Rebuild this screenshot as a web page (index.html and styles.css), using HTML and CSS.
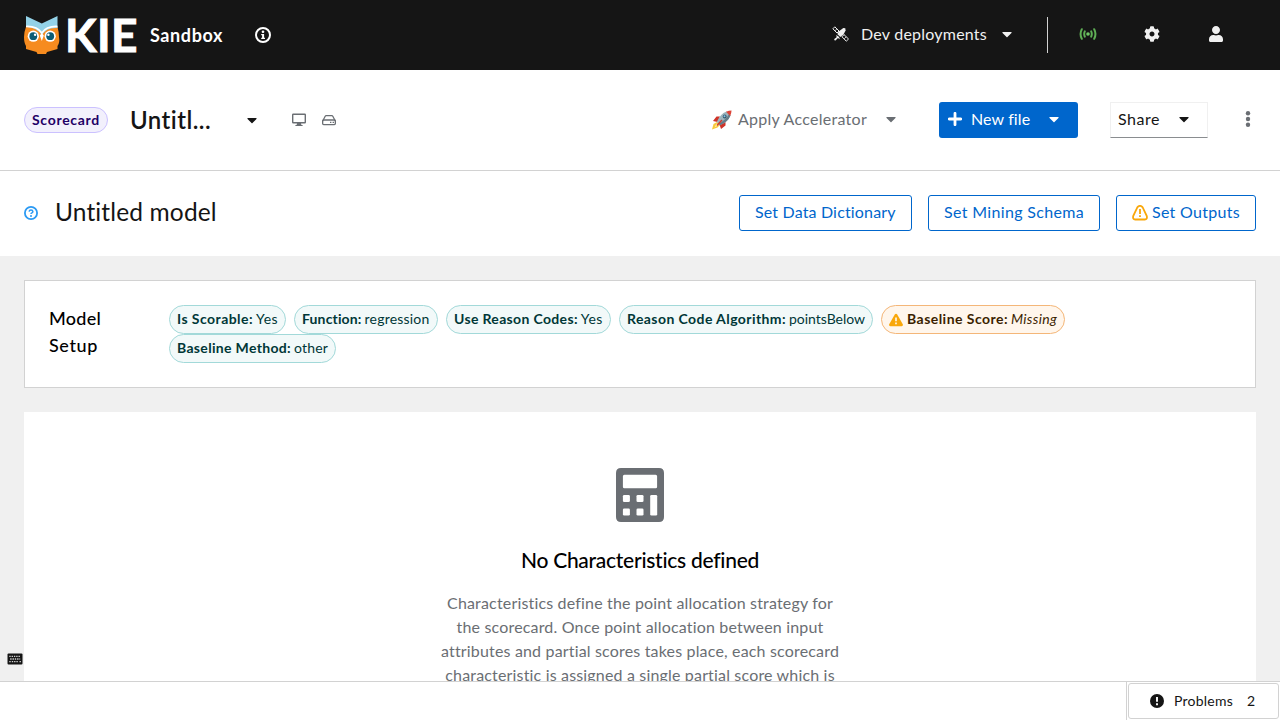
FILE: index.html
```html
<!DOCTYPE html>
<html lang="en">
<head>
<meta charset="utf-8">
<title>KIE Sandbox</title>
<link rel="stylesheet" href="styles.css">
</head>
<body>
<svg class="defs" width="0" height="0">
  <symbol id="caret" viewBox="0 0 320 512"><path d="M31.3 192h257.3c17.8 0 26.700 21.500 14.100 34.100L174.100 354.800c-7.800 7.800-20.500 7.800-28.300 0L17.200 226.100C4.600 213.500 13.500 192 31.300 192z"/></symbol>
</svg>
<div class="app">
  <header class="masthead">
    <svg class="owl" viewBox="0 0 36 40">
      <path d="M2 12 Q0 17 0 22 Q0 28 2 31 V34 L12.500 37 L13.500 39 H22 L23 37 L33.500 34 V31 Q36 28 35 22 Q35 17 33.500 12Z" fill="#f68b1f"/>
      <path d="M2 1 L17.800 8.500 L33.500 1 V13 Q23 12 17.800 20 Q12 12 2 12Z" fill="#93d2e8"/>
      <path d="M2 11.500 Q13 11 17.800 18 Q22.500 11 33.500 11.500" fill="none" stroke="#fff" stroke-width="1.700"/>
      <circle cx="9.300" cy="21.200" r="5.600" fill="#fff"/><circle cx="26.200" cy="21.200" r="5.600" fill="#fff"/>
      <circle cx="9.300" cy="21.200" r="3.900" fill="#0b5c75"/><circle cx="26.200" cy="21.200" r="3.900" fill="#0b5c75"/>
      <circle cx="11.100" cy="19.800" r="1.200" fill="#fff"/><circle cx="24.400" cy="19.800" r="1.200" fill="#fff"/>
      <path d="M15.800 20.500 L17.800 18 L19.800 20.500 L17.800 26Z" fill="#fff"/>
    </svg>
    <span class="kie">KIE</span>
    <span class="sandbox">Sandbox</span>
    <svg class="info" viewBox="0 0 16 16"><circle cx="8" cy="8" r="7" fill="none" stroke="#fff" stroke-width="2"/><path d="M8 3.400a1.350 1.350 0 1 1 0 2.700a1.350 1.350 0 0 1 0-2.700zM6.200 7h2.900v3.800h.9v1.300H6.200v-1.300h.9V8.300h-.9z" fill="#fff"/></svg>
    <div class="masthead-tools">
      <svg class="satellite" viewBox="0 0 16 16" fill="#f0f0f0"><path d="M1.800.8l4.200 4.200-2 2L-.1 2.800zM11 8.600l4.500 4.400-2.200 2.200L9 10.800z" fill="none" stroke="#f0f0f0" stroke-width="1"/><path d="M3.900 2.900L1.900 4.900M13.200 10.800l-2 2" stroke="#f0f0f0" stroke-width=".8"/><path d="M6 5.200L10.300 2l2 .3.300 2.200-2 3.800-3.200 2.800L4.300 8z"/><path d="M2.800 9.200q3.600.5 4 4L4.900 12.100l-1.600 1.600-1.400-1 1.900-1.800z"/><circle cx="2.200" cy="13.600" r="1"/></svg>
      <span class="dev">Dev deployments</span>
      <svg class="caret dev-caret"><use href="#caret"/></svg>
      <span class="divider"></span>
      <svg class="signal" viewBox="0 0 18 16" fill="none" stroke="#5fae55" stroke-width="2" stroke-linecap="round"><circle cx="9" cy="8" r="1.800" fill="#6ec664" stroke="none"/><path d="M5.800 5.400Q4.600 8 5.800 10.600M12.200 5.400Q13.400 8 12.200 10.600M2.800 3.200Q.3 8 2.800 12.800M15.200 3.200Q17.700 8 15.200 12.800"/></svg>
      <svg class="cog" viewBox="0 0 512 512" fill="#f0f0f0"><path d="M487.400 315.700l-42.600-24.600c4.300-23.200 4.300-47 0-70.200l42.600-24.600c4.900-2.800 7.100-8.600 5.500-14-11.100-35.600-30-67.800-54.700-94.600-3.800-4.100-10-5.100-14.800-2.300L380.800 110c-17.900-15.400-38.500-27.300-60.800-35.100V25.800c0-5.600-3.900-10.500-9.400-11.700-36.700-8.200-74.300-7.800-109.200 0-5.500 1.200-9.400 6.100-9.400 11.700V75c-22.200 7.900-42.800 19.800-60.800 35.100L88.700 85.500c-4.900-2.800-11-1.900-14.800 2.300-24.700 26.700-43.600 58.900-54.700 94.600-1.700 5.400.6 11.200 5.500 14L67.300 221c-4.300 23.200-4.300 47 0 70.200l-42.600 24.600c-4.900 2.800-7.100 8.600-5.500 14 11.100 35.600 30 67.800 54.700 94.600 3.800 4.100 10 5.100 14.800 2.300l42.600-24.600c17.900 15.400 38.500 27.300 60.800 35.100v49.200c0 5.600 3.900 10.500 9.400 11.700 36.700 8.200 74.300 7.800 109.200 0 5.500-1.200 9.400-6.100 9.400-11.700v-49.200c22.200-7.900 42.800-19.800 60.800-35.100l42.600 24.600c4.900 2.800 11 1.900 14.800-2.300 24.700-26.700 43.600-58.900 54.700-94.600 1.500-5.500-.7-11.300-5.600-14.100zM256 336c-44.100 0-80-35.900-80-80s35.900-80 80-80 80 35.900 80 80-35.900 80-80 80z"/></svg>
      <svg class="user" viewBox="0 0 448 512" fill="#f0f0f0"><path d="M224 256c70.700 0 128-57.300 128-128S294.700 0 224 0 96 57.300 96 128s57.300 128 128 128zm89.600 32h-16.700c-22.200 10.200-46.900 16-72.900 16s-50.600-5.800-72.900-16h-16.700C60.200 288 0 348.200 0 422.400V464c0 26.500 21.500 48 48 48h352c26.500 0 48-21.500 48-48v-41.600c0-74.200-60.200-134.400-134.400-134.400z"/></svg>
    </div>
  </header>

  <section class="filebar">
    <span class="type-label"><b>Scorecard</b></span>
    <span class="filename">Untitl...</span>
    <svg class="caret file-caret"><use href="#caret"/></svg>
    <svg class="desktop" viewBox="0 0 14 14" fill="#6a6e73"><path fill-rule="evenodd" d="M1.200.5h11.600q1.200 0 1.200 1.200v7.600q0 1.200-1.200 1.200H9l.4 1.500h1.200v1H3.400v-1h1.200L5 10.500H1.200Q0 10.500 0 9.300V1.700Q0 .5 1.200.5zM1.400 1.900v7.200h11.200V1.900z"/></svg>
    <svg class="hdd" viewBox="0 0 14 14" fill="none" stroke="#6a6e73" stroke-width="1.300"><path d="M.7 8L3.200 3.200Q3.500 2.600 4.200 2.600h5.600q.7 0 1 .6L13.300 8"/><rect x=".65" y="7" width="12.700" height="4.600" rx="1"/><path d="M8 9.300h1.400M10.600 9.300H12"/></svg>
    <div class="file-actions">
      <svg class="rocket" viewBox="0 0 20 20"><path d="M5 12L1.500 14 0 19.500 5.500 17.500 8 15z" fill="#f7c93a"/><path d="M4.500 13.500L2.500 17.500 7 15z" fill="#fff0a0"/><path d="M8 6.500H4.500L1 11l4.500 1zM13.500 12v3.500L9 19l-1.500-4.500z" fill="#cf3429"/><path d="M4.800 12Q8 4 14.500 1.500L18.500 5.500Q16 12 8 15.200z" fill="#9bb4bd"/><path d="M6.500 13.800Q14 10 17 4L18.500 5.500Q16 12 8 15.200z" fill="#647c88"/><path d="M14 1.800Q17 .5 19.500.500 19.500 3 18.200 6z" fill="#dc4437"/><circle cx="12.700" cy="6.500" r="1.900" fill="#37576b"/><circle cx="12.500" cy="6.300" r="1" fill="#83c6e8"/><path d="M10 10L5 15.500" stroke="#d33a2e" stroke-width="1.500"/></svg>
      <span class="accel">Apply Accelerator</span>
      <svg class="caret accel-caret"><use href="#caret"/></svg>
      <button class="new-file"><svg class="plus" viewBox="0 0 14 14"><path d="M7 1.300v11.400M1.300 7h11.400" stroke="#fff" stroke-width="2.800" stroke-linecap="round"/></svg><span>New file</span><svg class="caret"><use href="#caret"/></svg></button>
      <button class="share"><span>Share</span><svg class="caret"><use href="#caret"/></svg></button>
      <svg class="kebab" viewBox="0 0 6 16" fill="#6a6e73"><circle cx="3" cy="2.300" r="2.200"/><circle cx="3" cy="8" r="2.200"/><circle cx="3" cy="13.700" r="2.200"/></svg>
    </div>
  </section>

  <section class="titlebar">
    <svg class="help" viewBox="0 0 14 14" fill="none" stroke="#2b9af3"><circle cx="7" cy="7" r="6.100" stroke-width="1.800"/><path d="M5.100 5.600Q5.300 4.100 7 4.100T8.900 5.600Q8.900 6.400 7.900 6.900 7 7.300 7 8.100" stroke-width="1.500"/><circle cx="7" cy="9.900" r="1" fill="#2b9af3" stroke="none"/></svg>
    <h1 class="model-name">Untitled model</h1>
    <div class="title-actions">
      <button class="outline dict"><span>Set Data Dictionary</span></button>
      <button class="outline mining"><span>Set Mining Schema</span></button>
      <button class="outline outputs"><svg class="warn-outline" viewBox="0 0 16 16" fill="none" stroke="#f9a70a" stroke-width="1.800"><path d="M5.300 2.400Q8-.7 10.700 2.400L14.700 10.800Q15.700 14.300 12.700 14.500H3.300Q.3 14.300 1.300 10.800z"/><path d="M8 4v5M8 10.200v1.900"/></svg><span>Set Outputs</span></button>
    </div>
  </section>

  <main class="canvas">
    <section class="setup">
      <h2 class="setup-title"><span class="line-model">Model</span><span class="line-setup">Setup</span></h2>
      <div class="labels">
        <span class="chip scorable"><b>Is Scorable:</b><span>Yes</span></span>
        <span class="chip function"><b>Function:</b><span>regression</span></span>
        <span class="chip reason-codes"><b>Use Reason Codes:</b><span>Yes</span></span>
        <span class="chip algorithm"><b>Reason Code Algorithm:</b><span>pointsBelow</span></span>
        <span class="chip orange"><svg class="warn" viewBox="0 0 14 14"><path d="M7 .7q.7 0 1.100.6l5.700 10q.5 1.500-1.100 1.900H1.300Q-.3 12.800.2 11.300l5.700-10Q6.300.7 7 .7z" fill="#f9a70a"/><path d="M7 4.500v3.700M7 9.500v1.700" stroke="#fff" stroke-width="1.500"/></svg><b>Baseline Score:</b><i>Missing</i></span>
        <span class="chip method"><b>Baseline Method:</b><span>other</span></span>
      </div>
    </section>
    <section class="empty">
      <svg class="calc" viewBox="0 0 48 54"><path fill="#6a6e73" fill-rule="evenodd" d="M5 0h38q5 0 5 5v44q0 5-5 5H5q-5 0-5-5V5q0-5 5-5zM8.400 6.700q-1.500 0-1.500 1.500v10.600q0 1.500 1.500 1.500h31.200q1.500 0 1.500-1.500V8.200q0-1.500-1.500-1.500z"/><g fill="#fff"><rect x="6.900" y="27" width="7" height="7" rx="1.300"/><rect x="20.500" y="27" width="7" height="7" rx="1.300"/><rect x="6.900" y="40.500" width="7" height="7" rx="1.300"/><rect x="20.500" y="40.500" width="7" height="7" rx="1.300"/><rect x="34.200" y="27" width="7" height="20.500" rx="1.300"/></g></svg>
      <h3 class="empty-title">No Characteristics defined</h3>
      <p class="empty-body"><span>Characteristics define the point allocation strategy for</span><span>the scorecard. Once point allocation between input</span><span>attributes and partial scores takes place, each scorecard</span><span>characteristic is assigned a single partial score which is</span></p>
    </section>
    <svg class="keyboard" viewBox="0 0 16 12"><rect x=".5" y=".5" width="15" height="11" rx="1" fill="#151515"/><path d="M2.300 3.300h11.500M3.200 6h10M2.300 8.700h1.400M4.800 8.700h6.600M12.500 8.700h1.400" stroke="#d0d0d0" stroke-width="1.300" stroke-dasharray="1.400 .9"/></svg>
  </main>

  <footer class="dock">
    <div class="dock-end">
      <button class="problems"><svg class="bang" viewBox="0 0 14 14"><circle cx="7" cy="7" r="7" fill="#151515"/><path d="M7 3v4.700M7 9.200v2" stroke="#fff" stroke-width="1.900"/></svg><span>Problems</span><span class="count">2</span></button>
    </div>
  </footer>
</div>
</body>
</html>
```
FILE: styles.css
```css
* { box-sizing: border-box; }
body { margin: 0; font-family: Lato, "Noto Sans", sans-serif; font-size: 16px; line-height: 24px; color: #151515; background: #f0f0f0; }
h1, h2, h3, p { margin: 0; font-weight: 400; }
svg { flex: none; display: block; }
span, b, i, h1 { white-space: nowrap; }
button { font: inherit; padding: 0; margin: 0; display: flex; align-items: center; flex: none; }
button span { padding-bottom: 2px; }
.defs { position: absolute; }
.app { width: 1280px; height: 720px; display: flex; flex-direction: column; overflow: hidden; }
.caret { width: 10px; height: 16px; fill: currentColor; }

.masthead { height: 70px; flex: none; display: flex; align-items: center; background: #151515; color: #f0f0f0; padding-left: 24px; }
.owl { width: 36px; height: 40px; }
.kie { width: 74px; margin-left: 5px; font-size: 46px; line-height: 46px; font-weight: 700; letter-spacing: .4px; color: #fff; -webkit-text-stroke: 1px #fff; }
.sandbox { width: 73px; margin-left: 11px; font-size: 18px; font-weight: 700; letter-spacing: .6px; color: #fff; }
.info { width: 16px; height: 16px; margin-left: 32px; }
.masthead-tools { margin-left: auto; display: flex; align-items: center; padding-right: 57px; }
.satellite { width: 16px; height: 16px; margin-bottom: 2px; overflow: visible; }
.dev { width: 126px; margin-left: 12px; padding-bottom: 2px; letter-spacing: .226px; }
.dev-caret { margin-left: 15px; margin-bottom: 2px; }
.divider { width: 1px; height: 36px; margin-left: 35px; background: #d2d2d2; }
.signal { width: 18px; height: 16px; margin: 0 0 2px 31px; }
.cog { width: 16px; height: 16px; margin: 0 0 2px 47px; }
.user { width: 14px; height: 16px; margin: 0 0 2px 49px; }

.filebar { height: 101px; flex: none; display: flex; align-items: center; padding: 0 29px 0 24px; background: #fff; border-bottom: 1px solid #d2d2d2; }
.type-label { width: 84px; height: 26px; display: flex; align-items: center; padding-left: 7px; border: 1px solid #cbc1ff; border-radius: 13px; background: #f2f0fc; color: #1f0066; font-size: 14px; letter-spacing: .7px; }
.filename { width: 81px; margin-left: 22px; font-size: 24px; font-weight: 600; letter-spacing: .45px; }
.file-caret { margin-left: 36px; }
.desktop { width: 14px; height: 14px; margin-left: 35px; }
.hdd { width: 14px; height: 14px; margin-left: 16px; }
.file-actions { margin-left: auto; display: flex; align-items: center; color: #6a6e73; }
.rocket { width: 20px; height: 20px; }
.accel { width: 129px; margin-left: 6px; padding-bottom: 2px; letter-spacing: .274px; }
.accel-caret { margin-left: 19px; margin-bottom: 2px; }
.new-file { width: 139px; height: 36px; margin-left: 43px; padding-left: 9px; border: 0; border-radius: 3px; background: #06c; color: #fff; }
.plus { width: 14px; height: 14px; margin: 0 9px 2px 0; }
.new-file .caret { margin: 0 0 2px 19px; }
.new-file span { width: 59px; letter-spacing: .117px; }
.share { width: 98px; height: 36px; margin-left: 32px; padding-left: 7px; border: 1px solid #f0f0f0; border-bottom-color: #8a8d90; background: #fff; color: #151515; }
.share span { width: 42px; letter-spacing: .525px; }
.share .caret { margin: 0 0 2px 19px; }
.kebab { width: 6px; height: 16px; margin: 0 0 2px 37px; }

.titlebar { height: 85px; flex: none; display: flex; align-items: center; padding: 0 24px 1px; background: #fff; }
.help { width: 14px; height: 14px; }
.model-name { margin-left: 17px; padding-bottom: 3px; font-size: 24.5px; line-height: 30px; letter-spacing: .14px; }
.title-actions { margin-left: auto; display: flex; gap: 16px; }
.outline { height: 36px; border: 1px solid #06c; border-radius: 3px; background: #fff; color: #06c; padding-left: 15px; }
.dict { width: 173px; letter-spacing: .167px; }
.mining { width: 172px; letter-spacing: .335px; }
.outputs { width: 140px; letter-spacing: .294px; }
.warn-outline { width: 16px; height: 16px; margin: 0 4px 1px 0; }

.canvas { position: relative; flex: 1; min-height: 0; overflow: hidden; background: #f0f0f0; padding: 24px 24px 0; display: flex; flex-direction: column; gap: 24px; }
.setup { height: 108px; flex: none; display: flex; padding: 24px; background: #fff; border: 1px solid #d2d2d2; }
.setup-title { width: 120px; display: flex; flex-direction: column; color: #000; font-size: 18px; line-height: 27px; font-weight: 500; }
.line-model { letter-spacing: .26px; }
.line-setup { letter-spacing: .62px; }
.labels { display: flex; flex-wrap: wrap; column-gap: 8px; align-content: flex-start; flex: 1; padding-right: 100px; }
.chip { height: 29px; display: flex; align-items: center; padding: 0 0 2px 7px; border: 1px solid #a2d9d9; border-radius: 15px; background: #f2f9f9; color: #003737; font-size: 14px; line-height: 21px; }
.chip b { margin-right: 3px; }
.scorable { width: 117px; letter-spacing: .45px; }
.function { width: 144px; letter-spacing: .2px; }
.function b { letter-spacing: .14px; }
.reason-codes { width: 165px; letter-spacing: .34px; }
.algorithm { width: 254px; letter-spacing: -.02px; }
.algorithm b { letter-spacing: .417px; }
.orange { width: 184px; border-color: #f4b678; background: #fff6ec; color: #3b1f00; letter-spacing: .31px; }
.orange b { letter-spacing: .461px; }
.method { width: 167px; letter-spacing: .172px; }
.method b { letter-spacing: .327px; }
.warn { width: 14px; height: 14px; margin: 2px 4px 0 0; }

.empty { height: 400px; flex: none; display: flex; flex-direction: column; align-items: center; padding-top: 56px; background: #fff; }
.calc { width: 48px; height: 54px; }
.empty-title { margin-top: 23px; font-size: 21px; line-height: 30px; font-weight: 500; letter-spacing: -.27px; color: #000; }
.empty-body { margin-top: 16px; display: flex; flex-direction: column; align-items: center; color: #6a6e73; letter-spacing: .17px; }
.keyboard { position: absolute; left: 6.5px; top: 396.5px; width: 16px; height: 12px; }

.dock { height: 39px; flex: none; display: flex; justify-content: flex-end; background: #fff; border-top: 1px solid #d2d2d2; }
.dock-end { width: 154px; border-left: 1px solid #d2d2d2; padding: 1px 1px 0; }
.problems { width: 151px; height: 36px; padding-left: 21px; border: 1px solid #d2d2d2; border-radius: 3px; background: #fff; color: #151515; font-size: 14px; letter-spacing: .23px; }
.problems span { padding: 0; }
.bang { width: 14px; height: 14px; margin-right: 10px; }
.count { margin-left: 14px; }
```
